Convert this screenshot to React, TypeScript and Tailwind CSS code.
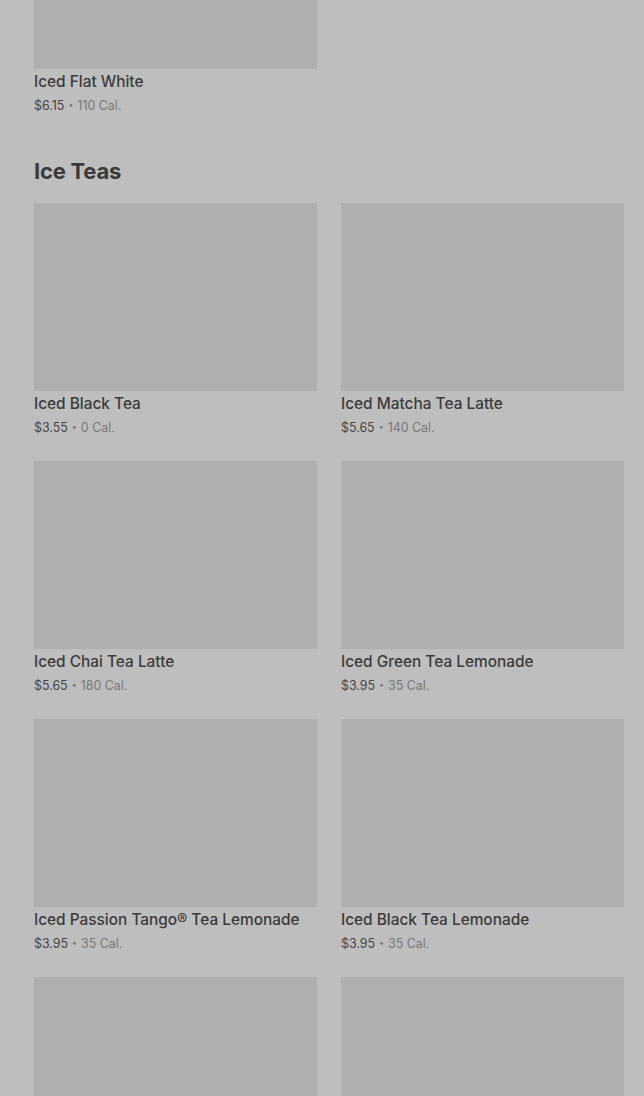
const teas = [
  { name: "Iced Black Tea", price: "$3.55", cal: "0 Cal." },
  { name: "Iced Matcha Tea Latte", price: "$5.65", cal: "140 Cal." },
  { name: "Iced Chai Tea Latte", price: "$5.65", cal: "180 Cal." },
  { name: "Iced Green Tea Lemonade", price: "$3.95", cal: "35 Cal." },
  { name: "Iced Passion Tango® Tea Lemonade", price: "$3.95", cal: "35 Cal." },
  { name: "Iced Black Tea Lemonade", price: "$3.95", cal: "35 Cal." },
  { name: "", price: "", cal: "" },
  { name: "", price: "", cal: "" },
];

function ItemCard({
  name,
  price,
  cal,
  imgClass = "h-[188px]",
}: {
  name: string;
  price: string;
  cal: string;
  imgClass?: string;
}) {
  return (
    <div className="mb-6 flex flex-col">
      <div className={`${imgClass} w-full bg-[#afafaf]`}></div>
      {name && (
        <>
          <p className="pt-[1px] text-[15.4px] leading-6 font-medium text-[#3b3b3b]">
            {name}
          </p>
          <p className="mt-[1px] mb-[-2px] flex items-center text-[12.4px] leading-[22px] text-[#454545]">
            {price}
            <span className="relative -top-[2px] mx-[4px] text-[9px] leading-none text-[#7a7a7a]">•</span>
            <span className="text-[#787878]">{cal}</span>
          </p>
        </>
      )}
    </div>
  );
}

export default function App() {
  return (
    <div
      className="min-h-[1096px] h-[1096px] overflow-hidden bg-[#bebebe] pl-[34px] pr-[20px]"
      style={{ fontFamily: "Inter, 'Noto Sans', sans-serif" }}
    >
      {/* Previous section tail */}
      <div className="grid grid-cols-2 gap-x-6">
        <ItemCard
          name="Iced Flat White"
          price="$6.15"
          cal="110 Cal."
          imgClass="h-[69px]"
        />
      </div>

      {/* Ice Teas */}
      <h2 className="mt-[16px] mb-[16px] text-[22px] leading-8 font-bold tracking-[-0.01em] text-[#3a3a3a]">
        Ice Teas
      </h2>
      <div className="grid grid-cols-2 gap-x-6">
        {teas.map((t, i) => (
          <ItemCard key={i} name={t.name} price={t.price} cal={t.cal} />
        ))}
      </div>
    </div>
  );
}
